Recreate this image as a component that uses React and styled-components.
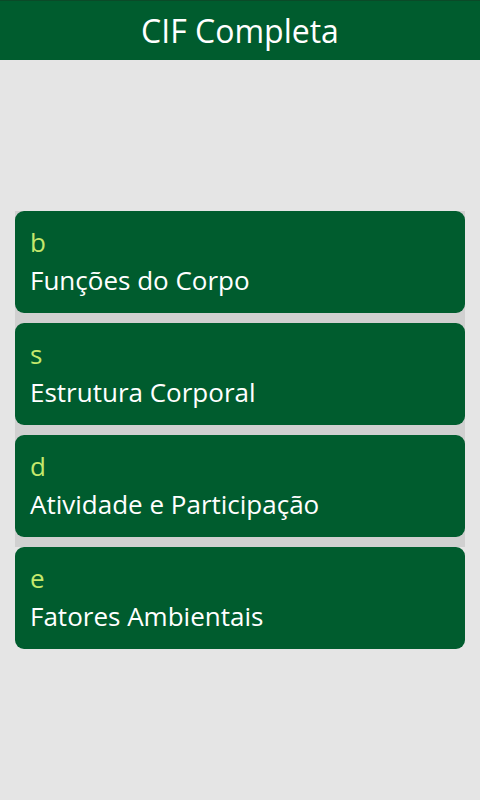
import React from 'react';
import styled, { createGlobalStyle } from 'styled-components';

const GlobalStyle = createGlobalStyle`
  html, body {
    margin: 0;
    padding: 0;
    background: #e5e5e5;
    font-family: "Open Sans", "Noto Sans", sans-serif;
  }
`;

const Page = styled.div`
  min-height: 800px;
  background: #e5e5e5;
`;

const Header = styled.header`
  height: 59px;
  background: #005c2e;
  border-top: 1px solid #0b4a28;
  display: flex;
  align-items: center;
  justify-content: center;
  color: #ffffff;
  font-size: 32px;
`;

const List = styled.div`
  margin: 151px 15px 0;
  display: flex;
  flex-direction: column;
`;

const Item = styled.div`
  padding-bottom: ${({ $last }) => ($last ? '0' : '10px')};
  background: ${({ $last }) => ($last ? 'transparent' : '#d0d0d0')};
`;

const Card = styled.div`
  height: 102px;
  background: #005c2e;
  border-radius: 9px;
  padding: 12px 15px 0;
  box-sizing: border-box;
  display: flex;
  flex-direction: column;
`;

const Code = styled.div`
  color: #c5e86c;
  font-size: 26px;
  line-height: 38px;
`;

const Name = styled.div`
  color: #ffffff;
  font-size: 26px;
  line-height: 38px;
`;

const items = [
  { code: 'b', name: 'Funções do Corpo' },
  { code: 's', name: 'Estrutura Corporal' },
  { code: 'd', name: 'Atividade e Participação' },
  { code: 'e', name: 'Fatores Ambientais' },
];

export default function App() {
  return (
    <Page>
      <GlobalStyle />
      <Header>CIF Completa</Header>
      <List>
        {items.map((it, i) => (
          <Item key={it.code} $last={i === items.length - 1}>
            <Card>
              <Code>{it.code}</Code>
              <Name>{it.name}</Name>
            </Card>
          </Item>
        ))}
      </List>
    </Page>
  );
}
